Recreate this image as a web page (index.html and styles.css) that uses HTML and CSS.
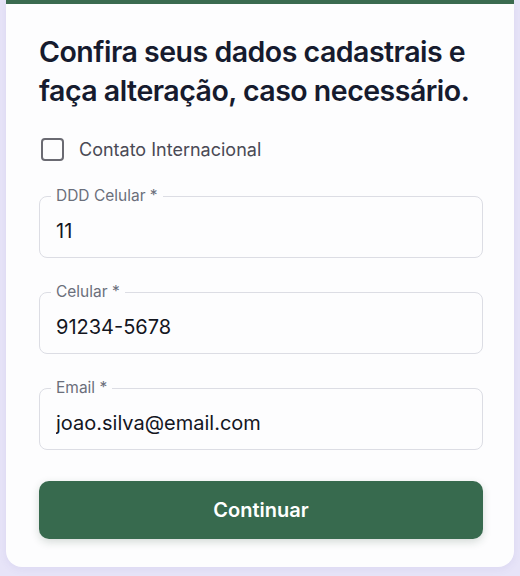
FILE: index.html
```html
<!DOCTYPE html>
<html lang="pt-BR">
<head>
    <meta charset="UTF-8">
    <meta name="viewport" content="width=device-width, initial-scale=1.0">
    <title>Confira seus dados</title>
    <link rel="stylesheet" href="styles.css">
</head>
<body>
    <div class="card">
        <h1>Confira seus dados cadastrais e faça alteração, caso necessário.</h1>
        <form class="data-form" onsubmit="return false">
            <label class="check-row">
                <input type="checkbox" id="internacional">
                <span class="check-box"></span>
                <span>Contato Internacional</span>
            </label>

            <fieldset class="field">
                <legend>DDD Celular *</legend>
                <input type="text" name="ddd" value="11">
            </fieldset>

            <fieldset class="field">
                <legend>Celular *</legend>
                <input type="text" name="celular" value="91234-5678">
            </fieldset>

            <fieldset class="field">
                <legend>Email *</legend>
                <input type="email" name="email" value="joao.silva@email.com">
            </fieldset>

            <button type="submit">Continuar</button>
        </form>
    </div>
</body>
</html>
```

FILE: styles.css
```css
body {
    font-family: Inter, "Noto Sans", sans-serif;
    margin: 0;
    padding: 0 6px;
    background-color: #e7e4f8;
    min-height: 100vh;
    box-sizing: border-box;
}
.card {
    background-color: #fdfdfe;
    border-top: 4px solid #3b6b50;
    border-radius: 0 0 16px 16px;
    padding: 28px 31px 28px 33px;
    box-shadow: 0 2px 8px rgba(90, 80, 160, 0.08);
}
h1 {
    margin: 0;
    font-size: 28.5px;
    line-height: 39px;
    font-weight: 600;
    color: #161b2e;
    letter-spacing: -0.5px;
}
.data-form {
    display: flex;
    flex-direction: column;
}
.check-row {
    display: flex;
    align-items: center;
    gap: 15px;
    margin: 28px 0 0 2px;
    font-size: 18px;
    color: #4a4a55;
    cursor: pointer;
}
.check-row input {
    display: none;
}
.check-box {
    width: 19px;
    height: 19px;
    border: 2px solid #6a6a72;
    border-radius: 4px;
}
.field {
    margin: 26px 0 0;
    padding: 0 16px 4px;
    border: 1px solid #dcdde4;
    border-radius: 8px;
}
.field + .field {
    margin-top: 25px;
}
.field legend {
    margin-left: -5px;
    padding: 0 5px;
    font-size: 15.5px;
    line-height: 18px;
    color: #6b6f7b;
}
.field input {
    width: 100%;
    height: 48px;
    padding: 3px 0 0;
    box-sizing: border-box;
    border: none;
    outline: none;
    background: transparent;
    font-family: inherit;
    font-size: 20px;
    color: #14161f;
}
button {
    margin-top: 31px;
    height: 58px;
    border: none;
    border-radius: 10px;
    background-color: #376a4e;
    color: #fff;
    font-family: inherit;
    font-size: 20px;
    font-weight: 600;
    cursor: pointer;
    box-shadow: 0 3px 8px rgba(30, 60, 40, 0.18);
}
```
